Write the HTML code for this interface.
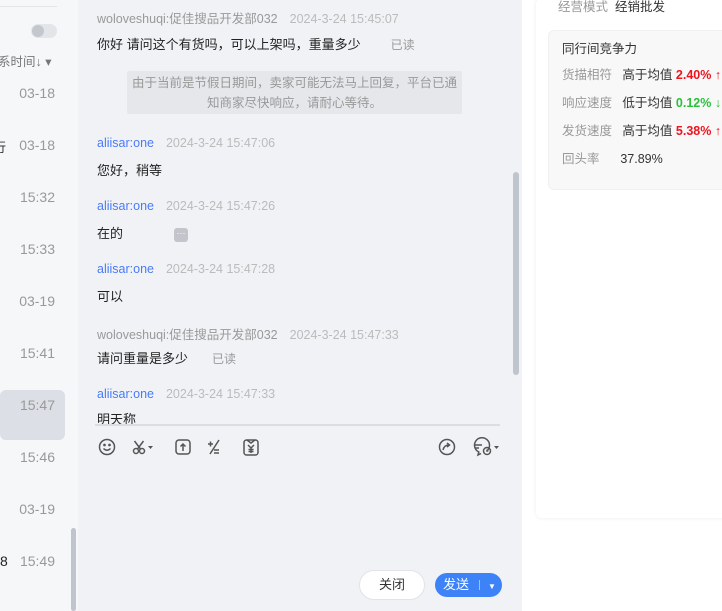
<!DOCTYPE html>
<html><head><meta charset="utf-8"><style>
*{margin:0;padding:0;box-sizing:border-box}
body{width:722px;height:611px;overflow:hidden;position:relative;font-family:"Liberation Sans","Noto Sans CJK SC",sans-serif;font-size:13px;background:#fff}
.a{position:absolute;white-space:nowrap}
.left{position:absolute;left:0;top:0;width:78px;height:611px;background:#f6f7f9;overflow:hidden}
.mid{position:absolute;left:78px;top:0;width:444px;height:611px;background:#f0f2f6}
.t{color:#999;font-size:14px;right:23px}
.n{color:#4a7bf7;font-size:12.5px}
.g{color:#aaa;font-size:12.5px}
.m{color:#222;font-size:13px}
.r{color:#999}
.sp{display:inline-block;width:12px}
</style></head><body>
<div class="left">
 <div class="a" style="left:0;top:6px;width:57px;height:1px;background:#e4e6ea"></div>
 <div class="a" style="left:31px;top:24px;width:26px;height:14px;border-radius:7px;background:#e3e5e9"></div>
 <div class="a" style="left:32px;top:25px;width:12px;height:12px;border-radius:6px;background:#c4c7cd"></div>
 <div class="a" style="left:-2px;top:51px;font-size:12.5px;color:#777">系时间↓ ▾</div>
 <div class="a" style="left:0;top:390px;width:65px;height:50px;border-radius:6px;background:#dcdfe5"></div>
 <div class="a t" style="top:85px">03-18</div>
 <div class="a" style="left:-7px;top:137px;color:#333">行</div>
 <div class="a t" style="top:137px">03-18</div>
 <div class="a t" style="top:189px">15:32</div>
 <div class="a t" style="top:241px">15:33</div>
 <div class="a t" style="top:293px">03-19</div>
 <div class="a t" style="top:345px">15:41</div>
 <div class="a t" style="top:397px">15:47</div>
 <div class="a t" style="top:449px">15:46</div>
 <div class="a t" style="top:501px">03-19</div>
 <div class="a" style="left:0;top:553px;font-size:14px;color:#222">8</div>
 <div class="a t" style="top:553px">15:49</div>
 <div class="a" style="left:71px;top:528px;width:5px;height:83px;border-radius:3px;background:#c0c4cc"></div>
</div>
<div class="mid">
 <div class="a g" style="left:19px;top:8px;color:#999">woloveshuqi:促佳搜品开发部032<span class="sp"></span><span style="color:#bbb">2024-3-24 15:45:07</span></div>
 <div class="a m" style="left:19px;top:34px">你好 请问这个有货吗，可以上架吗，重量多少<span class="r" style="margin-left:30px;font-size:12px">已读</span></div>
 <div class="a" style="left:49px;top:71px;width:335px;height:43px;background:#e5e7eb;border-radius:2px;color:#999;font-size:12.5px;text-align:center;line-height:20px;padding:2px 0 0">由于当前是节假日期间，卖家可能无法马上回复，平台已通<br>知商家尽快响应，请耐心等待。</div>
 <div class="a n" style="left:19px;top:136px">aliisar:one<span class="sp"></span><span style="color:#bbb">2024-3-24 15:47:06</span></div>
 <div class="a m" style="left:19px;top:160px">您好，稍等</div>
 <div class="a n" style="left:19px;top:199px">aliisar:one<span class="sp"></span><span style="color:#bbb">2024-3-24 15:47:26</span></div>
 <div class="a m" style="left:19px;top:223px">在的</div>
 <div class="a" style="left:96px;top:228px;width:14px;height:14px;border-radius:3px;background:#c2c5cb;color:#fff;font-size:9px;line-height:10px;text-align:center">···</div>
 <div class="a n" style="left:19px;top:262px">aliisar:one<span class="sp"></span><span style="color:#bbb">2024-3-24 15:47:28</span></div>
 <div class="a m" style="left:19px;top:286px">可以</div>
 <div class="a g" style="left:19px;top:324px;color:#999">woloveshuqi:促佳搜品开发部032<span class="sp"></span><span style="color:#bbb">2024-3-24 15:47:33</span></div>
 <div class="a m" style="left:19px;top:348px">请问重量是多少<span class="r" style="margin-left:24px;font-size:12px">已读</span></div>
 <div class="a n" style="left:19px;top:387px">aliisar:one<span class="sp"></span><span style="color:#bbb">2024-3-24 15:47:33</span></div>
 <div class="a m" style="left:19px;top:409px;height:15px;overflow:hidden">明天称</div>
 <div class="a" style="left:435px;top:172px;width:6px;height:203px;border-radius:3px;background:#c0c4cc"></div>
 <div class="a" style="left:17px;top:424px;width:405px;height:2px;background:#dcdde0"></div>
 <svg class="a" style="left:18px;top:436px" width="410" height="22" fill="none" stroke="#555" stroke-width="1.5">
  <circle cx="11" cy="11" r="7.5"/><circle cx="8.5" cy="9" r=".6" fill="#555"/><circle cx="13.5" cy="9" r=".6" fill="#555"/><path d="M7.5 12.5q3.5 3.5 7 0"/>
  <circle cx="40" cy="15" r="2.5"/><circle cx="46" cy="15" r="2.5"/><path d="M41.5 13l6-8M44.5 13l-6-8"/><path d="M52 10h5l-2.5 3z" fill="#555" stroke="none"/>
  <rect x="80" y="4" width="14" height="14" rx="3"/><path d="M87 15V8M84.5 10.5L87 8l2.5 2.5"/>
  <path d="M112 8h5M114.5 5.5v5M123 4l-9 14M118 14h5M118 17h5"/>
  <rect x="148" y="4" width="14" height="15" rx="2.5"/><path d="M151 4l4 3 4-3M152 9l3 3 3-3M155 12v5M152.5 13.5h5M152.5 15.5h5"/>
  <circle cx="351" cy="11" r="7.5"/><path d="M347 14q1-5 6-5M351 7l2.5 2-2.5 2"/>
  <path d="M385 17.5l-3 1.5 .8-3a7.5 7.5 0 1 1 8-1"/><path d="M379 9h7M379 12h4"/><circle cx="391" cy="15" r="3.5"/><path d="M391 13.5v1.5h1.3"/><path d="M398 10h5l-2.5 3z" fill="#555" stroke="none"/>
 </svg>
 <div class="a" style="left:281px;top:570px;width:66px;height:30px;border-radius:15px;background:#fff;border:1px solid #e2e3e6;text-align:center;line-height:28px;font-size:13px;color:#333">关闭</div>
 <div class="a" style="left:357px;top:573px;width:67px;height:24px;border-radius:12px;background:#3e82f7;color:#fff;font-size:13px;line-height:24px;padding-left:8px">发送<span style="display:inline-block;width:1px;height:10px;background:#9cc0fb;margin:0 8px 0 10px;vertical-align:-1px"></span><span style="font-size:8px">▼</span></div>
</div>
<div class="a" style="left:536px;top:-2px;width:200px;height:520px;background:#fff;border-radius:6px;box-shadow:0 0 4px rgba(0,0,0,.08)"></div>
<div class="a" style="left:558px;top:-4px;font-size:12.5px;color:#999">经营模式&nbsp;&nbsp;<span style="color:#333">经销批发</span></div>
<div class="a" style="left:548px;top:30px;width:190px;height:160px;border-radius:6px;background:#f8f8f9;border:1px solid #f0f0f2"></div>
<div class="a" style="left:562px;top:38px;font-size:12.5px;color:#333">同行间竞争力</div>
<div class="a" style="left:562px;top:64px;font-size:12.5px;color:#999">货描相符&nbsp;&nbsp;&nbsp;<span style="color:#333">高于均值 <b style="color:#f0141e">2.40% ↑</b></span></div>
<div class="a" style="left:562px;top:92px;font-size:12.5px;color:#999">响应速度&nbsp;&nbsp;&nbsp;<span style="color:#333">低于均值 <b style="color:#2cc03c">0.12% ↓</b></span></div>
<div class="a" style="left:562px;top:120px;font-size:12.5px;color:#999">发货速度&nbsp;&nbsp;&nbsp;<span style="color:#333">高于均值 <b style="color:#f0141e">5.38% ↑</b></span></div>
<div class="a" style="left:562px;top:148px;font-size:12.5px;color:#999">回头率&nbsp;&nbsp;&nbsp;&nbsp;&nbsp;&nbsp;<span style="color:#333">37.89%</span></div>
</body></html>
